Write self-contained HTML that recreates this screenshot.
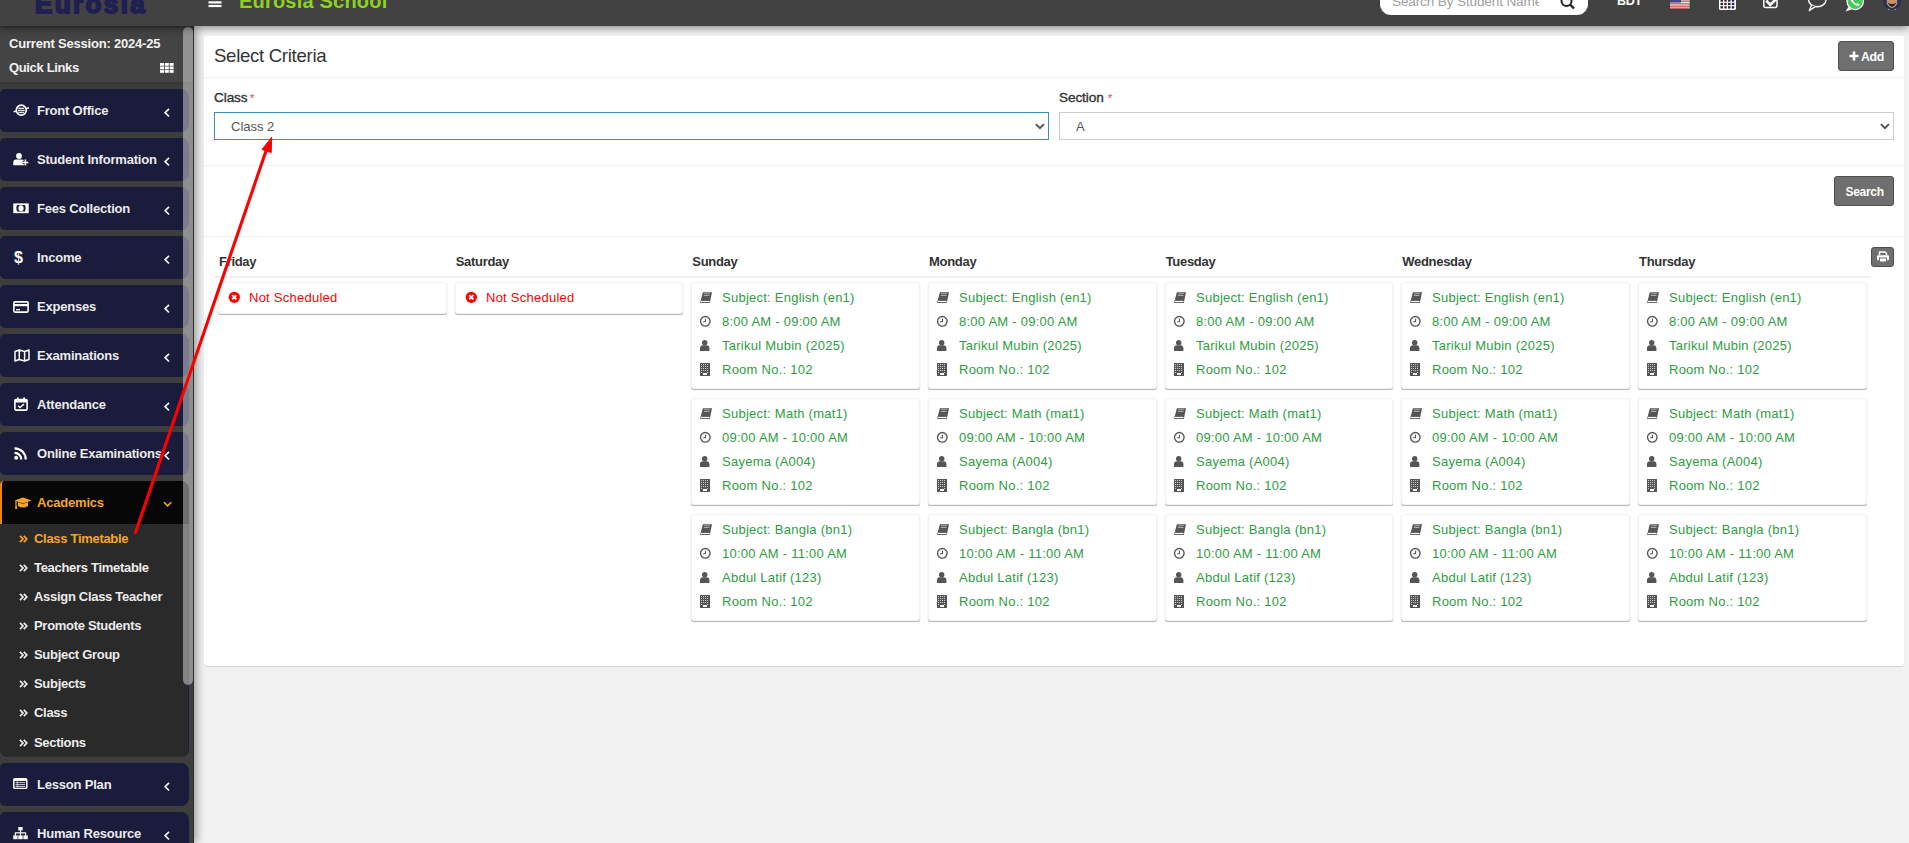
<!DOCTYPE html>
<html><head><meta charset="utf-8"><style>
*{box-sizing:border-box;margin:0;padding:0}
html,body{width:1909px;height:843px;overflow:hidden;background:#f2f2f2;font-family:"Liberation Sans",sans-serif}
.abs{position:absolute;white-space:nowrap}
#header{position:absolute;left:0;top:0;width:1909px;height:26px;background:#424242;z-index:5;box-shadow:0 2px 8px rgba(0,0,0,.45)}
#sidebar{position:absolute;left:0;top:26px;width:194px;height:817px;background:#3d3d3d;z-index:4;box-shadow:3px 0 8px rgba(0,0,0,.35)}
.mi{position:absolute;left:0;width:189px;height:43px;background:#1b1c3b;border-radius:5px 8px 8px 5px;color:#ebebeb;font-weight:700;font-size:13px}
.mi .t{position:absolute;left:37px;top:14px;white-space:nowrap;letter-spacing:-0.2px}
.mi svg{position:absolute}
.sub{position:absolute;left:0;width:189px;background:#2a2a2a;border-radius:0 0 7px 7px;border-right:1px solid #1e1f40}
.si{position:absolute;left:34px;color:#ececec;font-weight:700;font-size:13px;white-space:nowrap;letter-spacing:-0.3px}
.sic{position:absolute;left:19px}.sic svg{display:block}
#content{position:absolute;left:204px;top:36px;width:1700px;height:630px;background:#fff;border-radius:3px;box-shadow:0 1px 1px rgba(0,0,0,.13)}
.hr{position:absolute;left:0;width:1700px;height:1px;background:#f2f2f2}
.btn{position:absolute;background:#6f6f6f;border:1px solid #4f4f4f;border-radius:3px;color:#fff;font-size:12px}
.lbl{position:absolute;font-size:13.6px;font-weight:400;color:#333;white-space:nowrap;letter-spacing:-0.1px;-webkit-text-stroke:0.35px #333}
.lbl i{color:#f33;font-style:normal;font-size:11px;font-weight:400;position:absolute;top:0px;-webkit-text-stroke:0}
.sel{position:absolute;height:28px;border:1px solid #ccc;background:#fff;font-size:13px;color:#555}
.sel span{position:absolute;left:16px;top:6px}
.sel svg{position:absolute;right:3px;top:10px}
.day{position:absolute;font-weight:700;font-size:13px;color:#333;white-space:nowrap;letter-spacing:-0.3px}
.card{position:absolute;width:229px;background:#fff;border:1px solid #f2f2f2;border-radius:2.5px;box-shadow:0 1px 1px rgba(0,0,0,.3)}
.r{position:absolute;font-size:13px;color:#2e9d3f;white-space:nowrap;letter-spacing:0.25px}
.card svg{position:absolute}
</style></head><body>
<div id="header">
<div class="abs" style="left:35px;top:-9px;font-size:26px;font-weight:700;color:#201f52;letter-spacing:2.4px;-webkit-text-stroke:1.8px #201f52;line-height:27px">Eurosia</div>
<svg class="abs" style="left:208px;top:0" width="14" height="8"><rect x="0.5" y="1.3" width="13" height="2.2" fill="#fff"/><rect x="0.5" y="4.9" width="13" height="2.2" fill="#fff"/></svg>
<div class="abs" style="left:239px;top:-10px;font-size:20px;font-weight:700;color:#8ed21f;line-height:22px;letter-spacing:0.2px">Eurosia School</div>
<div class="abs" style="left:1380px;top:-20px;width:208px;height:35px;background:#fff;border-radius:11px"></div>
<div class="abs" style="left:1392px;top:-6px;font-size:13.6px;letter-spacing:-0.15px;color:#a0a0a0;width:147px;overflow:hidden;line-height:16px">Search By Student Name</div>
<svg class="abs" style="left:1560px;top:0" width="16" height="10"><circle cx="6.5" cy="1" r="5" fill="none" stroke="#222" stroke-width="2"/><line x1="10" y1="4.5" x2="14" y2="8.5" stroke="#222" stroke-width="2.4"/></svg>
<div class="abs" style="left:1617px;top:-6px;font-size:12.6px;color:#fff;font-weight:700;line-height:14px;letter-spacing:-0.4px">BDT</div>
<svg class="abs" style="left:1670px;top:0" width="20" height="9"><rect x="0" y="0" width="19.5" height="8.7" fill="#eee"/><rect x="0" y="0.6" width="19.5" height="1.1" fill="#c83a3a"/><rect x="0" y="3.3" width="19.5" height="1.1" fill="#c83a3a"/><rect x="0" y="5.6" width="19.5" height="1.1" fill="#c83a3a"/><rect x="0" y="7.6" width="19.5" height="1.1" fill="#c83a3a"/><rect x="0" y="0" width="11" height="2.6" fill="#3a4b8c"/></svg>
<svg class="abs" style="left:1719px;top:0" width="18" height="11"><rect x="0" y="-4" width="17" height="14" rx="1.6" fill="#fff"/><rect x="1.50" y="-0.60" width="2.5" height="2.3" fill="#2a2a2a"/><rect x="1.50" y="2.80" width="2.5" height="2.3" fill="#2a2a2a"/><rect x="1.50" y="6.20" width="2.5" height="2.3" fill="#2a2a2a"/><rect x="5.25" y="-0.60" width="2.5" height="2.3" fill="#5a2030"/><rect x="5.25" y="2.80" width="2.5" height="2.3" fill="#5a2030"/><rect x="5.25" y="6.20" width="2.5" height="2.3" fill="#5a2030"/><rect x="9.00" y="-0.60" width="2.5" height="2.3" fill="#2a2a2a"/><rect x="9.00" y="2.80" width="2.5" height="2.3" fill="#2a2a2a"/><rect x="9.00" y="6.20" width="2.5" height="2.3" fill="#2a2a2a"/><rect x="12.75" y="-0.60" width="2.5" height="2.3" fill="#202060"/><rect x="12.75" y="2.80" width="2.5" height="2.3" fill="#202060"/><rect x="12.75" y="6.20" width="2.5" height="2.3" fill="#202060"/></svg>
<svg class="abs" style="left:1763px;top:0" width="16" height="10"><path d="M0.8 -4 V6 Q0.8 7.4 2.2 7.4 H12.6 Q14 7.4 14 6 V-4" fill="none" stroke="#fff" stroke-width="1.5"/><path d="M3.3 0.6 L7.2 4.8 L14.8 -2.5" fill="none" stroke="#fff" stroke-width="2.6"/></svg>
<svg class="abs" style="left:1807px;top:0" width="21" height="12"><ellipse cx="10.3" cy="-0.5" rx="8.8" ry="7.2" fill="none" stroke="#fff" stroke-width="1.4"/><path d="M4.5 5.2 L2.3 10.6 L8.6 6.4" fill="#424242" stroke="#fff" stroke-width="1.3" stroke-linejoin="round"/></svg>
<svg class="abs" style="left:1845px;top:0" width="20" height="12"><circle cx="10.2" cy="1.4" r="8.8" fill="#fff"/><path d="M3.3 7 L0.6 11.5 L6.5 9.6 Z" fill="#fff"/><circle cx="10.2" cy="1.4" r="7.6" fill="#4ac959"/><path d="M5.6 -1.5 Q6.5 4.5 13.5 6 L14.8 4.3 L12.4 3.2 L11.2 4 Q8.6 2.6 8 0.2 L8.9 -1 Z" fill="#fff"/></svg>
<svg class="abs" style="left:1883px;top:0" width="19" height="11"><circle cx="9" cy="1" r="9" fill="#243058"/><path d="M3.8 -4 H14.2 V4 Q9 12 3.8 4Z" fill="#c8916c"/><path d="M4.5 2.5 Q9 11 13.5 2.5 Q9 5.5 4.5 2.5Z" fill="#2a2228"/><path d="M5 8.5 Q9 12 13 8.5 L13 10 H5Z" fill="#6fb0b0"/></svg>
</div>
<div id="sidebar">
<div class="abs" style="left:0;top:1px;width:194px;height:55px;background:#444"></div>
<div class="abs" style="left:0;top:0;width:194px;height:3px;background:linear-gradient(#363636,#444)"></div>
<div class="abs" style="left:0;top:56px;width:194px;height:5px;background:linear-gradient(#343434,#3d3d3d)"></div>
<div class="abs" style="left:9px;top:10px;font-size:13px;font-weight:700;color:#f2f2f2;letter-spacing:-0.2px;line-height:15px">Current Session: 2024-25</div>
<div class="abs" style="left:9px;top:34px;font-size:13px;font-weight:700;color:#f2f2f2;letter-spacing:-0.35px;line-height:15px">Quick Links</div>
<svg class="abs" style="left:160px;top:37px" width="14" height="10"><rect x="0.0" y="0.0" width="4" height="2.8" fill="#fff"/><rect x="0.0" y="3.5" width="4" height="2.8" fill="#fff"/><rect x="0.0" y="7.0" width="4" height="2.8" fill="#fff"/><rect x="4.8" y="0.0" width="4" height="2.8" fill="#fff"/><rect x="4.8" y="3.5" width="4" height="2.8" fill="#fff"/><rect x="4.8" y="7.0" width="4" height="2.8" fill="#fff"/><rect x="9.6" y="0.0" width="4" height="2.8" fill="#fff"/><rect x="9.6" y="3.5" width="4" height="2.8" fill="#fff"/><rect x="9.6" y="7.0" width="4" height="2.8" fill="#fff"/></svg>
<div class="mi" style="top:63px"><svg style="left:13px;top:15px" width="17" height="13" viewBox="0 0 17 13"><circle cx="8.3" cy="6.2" r="5" fill="none" stroke="#fff" stroke-width="1.7"/><rect x="5.3" y="3.6" width="6" height="1.5" fill="#ddd"/><rect x="5" y="5.8" width="6.6" height="1.5" fill="#ddd"/><rect x="5.3" y="8" width="6" height="1.2" fill="#ddd"/><path d="M0.6 7.8 L4 7 M12.8 4.6 L16 3.8" stroke="#fff" stroke-width="1.4"/></svg><div class="t">Front Office</div><svg style="left:164px;top:19px" width="7" height="10" viewBox="0 0 7 10"><path d="M5 0.9 L1.1 4.7 L5 8.5" fill="none" stroke="#f4f4f4" stroke-width="1.7"/></svg></div>
<div class="mi" style="top:112px"><svg style="left:13px;top:15px" width="17" height="13" viewBox="0 0 17 13"><circle cx="6" cy="3" r="2.9" fill="#fff"/><path d="M0.3 12.2 V9.5 Q0.3 6.6 3.2 6.6 H8.6 Q10.5 6.6 11 8 V12.2Z" fill="#fff"/><path d="M12.4 6.6 V12.4 M9.6 9.5 H15.4" stroke="#1b1c3b" stroke-width="3.2"/><path d="M12.4 6.6 V12.4 M9.6 9.5 H15.4" stroke="#fff" stroke-width="1.6"/></svg><div class="t">Student Information</div><svg style="left:164px;top:19px" width="7" height="10" viewBox="0 0 7 10"><path d="M5 0.9 L1.1 4.7 L5 8.5" fill="none" stroke="#f4f4f4" stroke-width="1.7"/></svg></div>
<div class="mi" style="top:161px"><svg style="left:13px;top:16px" width="16" height="11" viewBox="0 0 16 11"><rect x="0.3" y="0.4" width="15.4" height="9.8" fill="#fff"/><path d="M4 2 H12 Q13.6 5.3 12 8.6 H4 Q2.4 5.3 4 2Z" fill="#1b1c3b"/><ellipse cx="8" cy="5.3" rx="2.6" ry="3" fill="#fff"/></svg><div class="t">Fees Collection</div><svg style="left:164px;top:19px" width="7" height="10" viewBox="0 0 7 10"><path d="M5 0.9 L1.1 4.7 L5 8.5" fill="none" stroke="#f4f4f4" stroke-width="1.7"/></svg></div>
<div class="mi" style="top:210px"><div style="position:absolute;left:14px;top:13px;font-size:16px;line-height:18px;font-weight:700;color:#fff">$</div><div class="t">Income</div><svg style="left:164px;top:19px" width="7" height="10" viewBox="0 0 7 10"><path d="M5 0.9 L1.1 4.7 L5 8.5" fill="none" stroke="#f4f4f4" stroke-width="1.7"/></svg></div>
<div class="mi" style="top:259px"><svg style="left:13px;top:16px" width="16" height="12" viewBox="0 0 16 12"><rect x="0.9" y="0.9" width="14.2" height="10.2" rx="1" fill="none" stroke="#fff" stroke-width="1.6"/><rect x="1" y="3" width="14" height="2.2" fill="#fff"/><rect x="3" y="8" width="4" height="1.3" fill="#fff"/></svg><div class="t">Expenses</div><svg style="left:164px;top:19px" width="7" height="10" viewBox="0 0 7 10"><path d="M5 0.9 L1.1 4.7 L5 8.5" fill="none" stroke="#f4f4f4" stroke-width="1.7"/></svg></div>
<div class="mi" style="top:308px"><svg style="left:14px;top:15px" width="16" height="13" viewBox="0 0 16 13"><path d="M1 2.5 L5.3 1 L10.6 2.5 L15 1 V10.5 L10.6 12 L5.3 10.5 L1 12Z M5.3 1 V10.5 M10.6 2.5 V12" fill="none" stroke="#fff" stroke-width="1.5" stroke-linejoin="round"/></svg><div class="t">Examinations</div><svg style="left:164px;top:19px" width="7" height="10" viewBox="0 0 7 10"><path d="M5 0.9 L1.1 4.7 L5 8.5" fill="none" stroke="#f4f4f4" stroke-width="1.7"/></svg></div>
<div class="mi" style="top:357px"><svg style="left:14px;top:14px" width="14" height="14" viewBox="0 0 14 14"><rect x="0.9" y="2.5" width="12.2" height="10.6" rx="1" fill="none" stroke="#fff" stroke-width="1.6"/><rect x="1" y="2.5" width="12" height="3" fill="#fff"/><rect x="3" y="0.5" width="1.8" height="3" fill="#fff"/><rect x="9.2" y="0.5" width="1.8" height="3" fill="#fff"/><path d="M4 8.7 L6 10.6 L10 7" fill="none" stroke="#fff" stroke-width="1.5"/></svg><div class="t">Attendance</div><svg style="left:164px;top:19px" width="7" height="10" viewBox="0 0 7 10"><path d="M5 0.9 L1.1 4.7 L5 8.5" fill="none" stroke="#f4f4f4" stroke-width="1.7"/></svg></div>
<div class="mi" style="top:406px"><svg style="left:14px;top:15px" width="13" height="13" viewBox="0 0 13 13"><circle cx="2.2" cy="10.8" r="2" fill="#fff"/><path d="M0.5 5.8 A6.5 6.5 0 0 1 7.2 12.5" fill="none" stroke="#fff" stroke-width="2.2"/><path d="M0.5 1.3 A11 11 0 0 1 11.7 12.5" fill="none" stroke="#fff" stroke-width="2.2"/></svg><div class="t">Online Examinations</div><svg style="left:164px;top:19px" width="7" height="10" viewBox="0 0 7 10"><path d="M5 0.9 L1.1 4.7 L5 8.5" fill="none" stroke="#f4f4f4" stroke-width="1.7"/></svg></div>
<div class="mi" style="top:455px;background:#070707;border-radius:4px 8px 0 0;color:#f5a623;border-left:2px solid #ea8410"><svg style="left:12px;top:16px" width="18" height="12" viewBox="0 0 18 12"><path d="M0.5 3.5 L9 0.5 L17.5 3.5 L9 6.5Z" fill="#f5a623"/><path d="M4 5 V9 Q9 12 14 9 V5 L9 7Z" fill="#f5a623"/><path d="M2 4 V10" stroke="#f5a623" stroke-width="1.2"/><rect x="1.2" y="9.5" width="1.8" height="2.5" fill="#f5a623"/></svg><div class="t" style="left:35px">Academics</div><svg style="left:161px;top:20px" width="10" height="7" viewBox="0 0 10 7"><path d="M1 1.3 L4.6 4.9 L8.2 1.3" fill="none" stroke="#f5a623" stroke-width="1.6"/></svg></div>
<div class="sub" style="top:498px;height:233px"></div>
<div class="sic" style="top:508.5px;height:8px"><svg width="9" height="8" viewBox="0 0 9 8"><path d="M1 0.8 L4 4 L1 7.2 M4.8 0.8 L7.8 4 L4.8 7.2" fill="none" stroke="#f5a623" stroke-width="1.7"/></svg></div>
<div class="si" style="top:504.5px;color:#f5a623;line-height:15px">Class Timetable</div>
<div class="sic" style="top:537.6px;height:8px"><svg width="9" height="8" viewBox="0 0 9 8"><path d="M1 0.8 L4 4 L1 7.2 M4.8 0.8 L7.8 4 L4.8 7.2" fill="none" stroke="#ececec" stroke-width="1.7"/></svg></div>
<div class="si" style="top:533.6px;color:#ececec;line-height:15px">Teachers Timetable</div>
<div class="sic" style="top:566.8px;height:8px"><svg width="9" height="8" viewBox="0 0 9 8"><path d="M1 0.8 L4 4 L1 7.2 M4.8 0.8 L7.8 4 L4.8 7.2" fill="none" stroke="#ececec" stroke-width="1.7"/></svg></div>
<div class="si" style="top:562.8px;color:#ececec;line-height:15px">Assign Class Teacher</div>
<div class="sic" style="top:596.0px;height:8px"><svg width="9" height="8" viewBox="0 0 9 8"><path d="M1 0.8 L4 4 L1 7.2 M4.8 0.8 L7.8 4 L4.8 7.2" fill="none" stroke="#ececec" stroke-width="1.7"/></svg></div>
<div class="si" style="top:592.0px;color:#ececec;line-height:15px">Promote Students</div>
<div class="sic" style="top:625.1px;height:8px"><svg width="9" height="8" viewBox="0 0 9 8"><path d="M1 0.8 L4 4 L1 7.2 M4.8 0.8 L7.8 4 L4.8 7.2" fill="none" stroke="#ececec" stroke-width="1.7"/></svg></div>
<div class="si" style="top:621.1px;color:#ececec;line-height:15px">Subject Group</div>
<div class="sic" style="top:654.2px;height:8px"><svg width="9" height="8" viewBox="0 0 9 8"><path d="M1 0.8 L4 4 L1 7.2 M4.8 0.8 L7.8 4 L4.8 7.2" fill="none" stroke="#ececec" stroke-width="1.7"/></svg></div>
<div class="si" style="top:650.2px;color:#ececec;line-height:15px">Subjects</div>
<div class="sic" style="top:683.4px;height:8px"><svg width="9" height="8" viewBox="0 0 9 8"><path d="M1 0.8 L4 4 L1 7.2 M4.8 0.8 L7.8 4 L4.8 7.2" fill="none" stroke="#ececec" stroke-width="1.7"/></svg></div>
<div class="si" style="top:679.4px;color:#ececec;line-height:15px">Class</div>
<div class="sic" style="top:712.5px;height:8px"><svg width="9" height="8" viewBox="0 0 9 8"><path d="M1 0.8 L4 4 L1 7.2 M4.8 0.8 L7.8 4 L4.8 7.2" fill="none" stroke="#ececec" stroke-width="1.7"/></svg></div>
<div class="si" style="top:708.5px;color:#ececec;line-height:15px">Sections</div>
<div class="mi" style="top:737px"><svg style="left:13px;top:15px" width="15" height="11" viewBox="0 0 15 11"><rect x="0.8" y="0.8" width="13" height="9.6" rx="1.2" fill="none" stroke="#fff" stroke-width="1.5"/><rect x="1" y="1" width="12.6" height="2" fill="#fff"/><path d="M2.5 4.6 H12.2 M2.5 6.6 H12.2 M2.5 8.5 H12.2" stroke="#ddd" stroke-width="0.9"/><path d="M4.2 3 V9.5" stroke="#ddd" stroke-width="0.7"/></svg><div class="t">Lesson Plan</div><svg style="left:164px;top:19px" width="7" height="10" viewBox="0 0 7 10"><path d="M5 0.9 L1.1 4.7 L5 8.5" fill="none" stroke="#f4f4f4" stroke-width="1.7"/></svg></div>
<div class="mi" style="top:786px"><svg style="left:13px;top:15px" width="15" height="13" viewBox="0 0 15 13"><rect x="5.3" y="0" width="4.4" height="3.4" fill="#fff"/><rect x="0.2" y="8.4" width="4.4" height="3.8" fill="#fff"/><rect x="5.3" y="8.4" width="4.4" height="3.8" fill="#fff"/><rect x="10.4" y="8.4" width="4.4" height="3.8" fill="#fff"/><path d="M7.5 3.3 V8.4 M2.4 8.4 V5.8 H12.6 V8.4" fill="none" stroke="#fff" stroke-width="1.2"/></svg><div class="t">Human Resource</div><svg style="left:164px;top:19px" width="7" height="10" viewBox="0 0 7 10"><path d="M5 0.9 L1.1 4.7 L5 8.5" fill="none" stroke="#f4f4f4" stroke-width="1.7"/></svg></div>
<div class="abs" style="left:193px;top:0;width:1px;height:817px;background:#2e2e2e"></div>
<div class="abs" style="left:183px;top:1px;width:10px;height:658px;border-radius:5px;background:rgba(255,255,255,.42)"></div>
</div>
<div id="content">
<div class="abs" style="left:10px;top:9px;font-size:18.6px;letter-spacing:-0.3px;color:#333;line-height:22px">Select Criteria</div>
<div class="btn" style="left:1634px;top:5px;width:56px;height:30px"><svg style="position:absolute;left:10px;top:9px" width="10" height="10"><path d="M5 0.5 V9.5 M0.5 5 H9.5" stroke="#fff" stroke-width="2.6"/></svg><span style="position:absolute;left:22px;top:8px;font-size:12.3px;font-weight:700;letter-spacing:-0.3px">Add</span></div>
<div class="hr" style="top:41px"></div>
<div class="lbl" style="left:10px;top:54px;line-height:16px">Class<i style="left:36px">*</i></div>
<div class="lbl" style="left:855px;top:54px;line-height:16px">Section<i style="left:49px">*</i></div>
<div class="sel" style="left:10px;top:76px;width:835px;border-color:#3c8dbc"><span>Class 2</span><svg width="11" height="7" viewBox="0 0 11 7"><path d="M1.9 1.1 L5.9 5.1 L9.9 1.1" fill="none" stroke="#505050" stroke-width="1.9"/></svg></div>
<div class="sel" style="left:855px;top:76px;width:835px"><span>A</span><svg width="11" height="7" viewBox="0 0 11 7"><path d="M1.9 1.1 L5.9 5.1 L9.9 1.1" fill="none" stroke="#505050" stroke-width="1.9"/></svg></div>
<div class="hr" style="top:129px"></div>
<div class="btn" style="left:1630px;top:140px;width:60px;height:30px"><span style="position:absolute;left:10.5px;top:8px;font-size:12px;font-weight:700;letter-spacing:-0.3px">Search</span></div>
<div class="hr" style="top:200px"></div>
<div class="btn" style="left:1667px;top:211px;width:23px;height:20px;border-radius:3px"><svg style="position:absolute;left:4px;top:3px" width="14" height="12" viewBox="0 0 14 12"><path d="M3.5 4 V1 H9 L10.5 2.5 V4" fill="none" stroke="#fff" stroke-width="1.4"/><rect x="1" y="4.2" width="12" height="5" rx="1" fill="#fff"/><rect x="3.5" y="7" width="7" height="4" fill="#fff" stroke="#6f6f6f" stroke-width="1"/></svg></div>
<div class="abs" style="left:10px;top:240px;width:1657px;height:2px;background:#f0f0f0"></div>
<div class="day" style="left:15.0px;top:218px;line-height:15px">Friday</div>
<div class="day" style="left:251.7px;top:218px;line-height:15px">Saturday</div>
<div class="day" style="left:488.3px;top:218px;line-height:15px">Sunday</div>
<div class="day" style="left:725.0px;top:218px;line-height:15px">Monday</div>
<div class="day" style="left:961.7px;top:218px;line-height:15px">Tuesday</div>
<div class="day" style="left:1198.3px;top:218px;line-height:15px">Wednesday</div>
<div class="day" style="left:1435.0px;top:218px;line-height:15px">Thursday</div>
<div class="card" style="left:14px;top:246px;height:32px;width:229px"><svg style="left:9px;top:8px" width="13" height="13" viewBox="0 0 13 13"><circle cx="6.3" cy="6.3" r="5.6" fill="#f00"/><path d="M4.2 4.2 L8.4 8.4 M8.4 4.2 L4.2 8.4" stroke="#fff" stroke-width="1.9"/></svg><div class="r" style="left:30px;top:7px;color:#f00;line-height:15px;letter-spacing:0.25px">Not Scheduled</div></div>
<div class="card" style="left:251px;top:246px;height:32px;width:228px"><svg style="left:9px;top:8px" width="13" height="13" viewBox="0 0 13 13"><circle cx="6.3" cy="6.3" r="5.6" fill="#f00"/><path d="M4.2 4.2 L8.4 8.4 M8.4 4.2 L4.2 8.4" stroke="#fff" stroke-width="1.9"/></svg><div class="r" style="left:30px;top:7px;color:#f00;line-height:15px;letter-spacing:0.25px">Not Scheduled</div></div>
<div class="card" style="left:487px;top:246px;height:107px;width:229px"><svg style="left:8px;top:9px" width="13" height="12" viewBox="0 0 13 12"><path d="M2.9 0.2 H12 L9.8 11 H0.2 L0.4 9.4 Z" fill="#555"/><rect x="1" y="8.9" width="8.5" height="1.2" fill="#fff"/><path d="M4.2 1.8 H9.8 M3.8 3.5 H9.4" stroke="#a8a8a8" stroke-width="1.1"/></svg><svg style="left:7px;top:32px" width="13" height="13" viewBox="0 0 13 13"><circle cx="6.3" cy="6.3" r="4.8" fill="none" stroke="#555" stroke-width="1.35"/><path d="M6.5 3.7 V6.7 H4.2" fill="none" stroke="#555" stroke-width="1.1"/></svg><svg style="left:8px;top:57px" width="10" height="12" viewBox="0 0 10 12"><circle cx="4.7" cy="2.7" r="2.7" fill="#555"/><path d="M0 11 V8.2 Q0 5.3 2.9 5.3 H6.5 Q9.4 5.3 9.4 8.2 V11Z" fill="#555"/></svg><svg style="left:8px;top:80px" width="10" height="13" viewBox="0 0 10 13"><rect x="0" y="0" width="10" height="13" fill="#555"/><rect x="1" y="1" width="1" height="1" fill="#c8c8c8"/><rect x="1" y="3" width="1" height="1" fill="#c8c8c8"/><rect x="1" y="5" width="1" height="1" fill="#c8c8c8"/><rect x="1" y="7" width="1" height="1" fill="#c8c8c8"/><rect x="3" y="1" width="1" height="1" fill="#c8c8c8"/><rect x="3" y="3" width="1" height="1" fill="#c8c8c8"/><rect x="3" y="5" width="1" height="1" fill="#c8c8c8"/><rect x="3" y="7" width="1" height="1" fill="#c8c8c8"/><rect x="5" y="1" width="1" height="1" fill="#c8c8c8"/><rect x="5" y="3" width="1" height="1" fill="#c8c8c8"/><rect x="5" y="5" width="1" height="1" fill="#c8c8c8"/><rect x="5" y="7" width="1" height="1" fill="#c8c8c8"/><rect x="7" y="1" width="1" height="1" fill="#c8c8c8"/><rect x="7" y="3" width="1" height="1" fill="#c8c8c8"/><rect x="7" y="5" width="1" height="1" fill="#c8c8c8"/><rect x="7" y="7" width="1" height="1" fill="#c8c8c8"/><rect x="1" y="9" width="1" height="1" fill="#c8c8c8"/><rect x="7" y="9" width="1" height="1" fill="#c8c8c8"/><rect x="3" y="10" width="4" height="2" fill="#fff"/></svg><div class="r" style="left:30px;top:7px;line-height:15px">Subject: English (en1)</div><div class="r" style="left:30px;top:31px;line-height:15px">8:00 AM - 09:00 AM</div><div class="r" style="left:30px;top:55px;line-height:15px">Tarikul Mubin (2025)</div><div class="r" style="left:30px;top:79px;line-height:15px">Room No.: 102</div></div>
<div class="card" style="left:487px;top:362px;height:107px;width:229px"><svg style="left:8px;top:9px" width="13" height="12" viewBox="0 0 13 12"><path d="M2.9 0.2 H12 L9.8 11 H0.2 L0.4 9.4 Z" fill="#555"/><rect x="1" y="8.9" width="8.5" height="1.2" fill="#fff"/><path d="M4.2 1.8 H9.8 M3.8 3.5 H9.4" stroke="#a8a8a8" stroke-width="1.1"/></svg><svg style="left:7px;top:32px" width="13" height="13" viewBox="0 0 13 13"><circle cx="6.3" cy="6.3" r="4.8" fill="none" stroke="#555" stroke-width="1.35"/><path d="M6.5 3.7 V6.7 H4.2" fill="none" stroke="#555" stroke-width="1.1"/></svg><svg style="left:8px;top:57px" width="10" height="12" viewBox="0 0 10 12"><circle cx="4.7" cy="2.7" r="2.7" fill="#555"/><path d="M0 11 V8.2 Q0 5.3 2.9 5.3 H6.5 Q9.4 5.3 9.4 8.2 V11Z" fill="#555"/></svg><svg style="left:8px;top:80px" width="10" height="13" viewBox="0 0 10 13"><rect x="0" y="0" width="10" height="13" fill="#555"/><rect x="1" y="1" width="1" height="1" fill="#c8c8c8"/><rect x="1" y="3" width="1" height="1" fill="#c8c8c8"/><rect x="1" y="5" width="1" height="1" fill="#c8c8c8"/><rect x="1" y="7" width="1" height="1" fill="#c8c8c8"/><rect x="3" y="1" width="1" height="1" fill="#c8c8c8"/><rect x="3" y="3" width="1" height="1" fill="#c8c8c8"/><rect x="3" y="5" width="1" height="1" fill="#c8c8c8"/><rect x="3" y="7" width="1" height="1" fill="#c8c8c8"/><rect x="5" y="1" width="1" height="1" fill="#c8c8c8"/><rect x="5" y="3" width="1" height="1" fill="#c8c8c8"/><rect x="5" y="5" width="1" height="1" fill="#c8c8c8"/><rect x="5" y="7" width="1" height="1" fill="#c8c8c8"/><rect x="7" y="1" width="1" height="1" fill="#c8c8c8"/><rect x="7" y="3" width="1" height="1" fill="#c8c8c8"/><rect x="7" y="5" width="1" height="1" fill="#c8c8c8"/><rect x="7" y="7" width="1" height="1" fill="#c8c8c8"/><rect x="1" y="9" width="1" height="1" fill="#c8c8c8"/><rect x="7" y="9" width="1" height="1" fill="#c8c8c8"/><rect x="3" y="10" width="4" height="2" fill="#fff"/></svg><div class="r" style="left:30px;top:7px;line-height:15px">Subject: Math (mat1)</div><div class="r" style="left:30px;top:31px;line-height:15px">09:00 AM - 10:00 AM</div><div class="r" style="left:30px;top:55px;line-height:15px">Sayema (A004)</div><div class="r" style="left:30px;top:79px;line-height:15px">Room No.: 102</div></div>
<div class="card" style="left:487px;top:478px;height:107px;width:229px"><svg style="left:8px;top:9px" width="13" height="12" viewBox="0 0 13 12"><path d="M2.9 0.2 H12 L9.8 11 H0.2 L0.4 9.4 Z" fill="#555"/><rect x="1" y="8.9" width="8.5" height="1.2" fill="#fff"/><path d="M4.2 1.8 H9.8 M3.8 3.5 H9.4" stroke="#a8a8a8" stroke-width="1.1"/></svg><svg style="left:7px;top:32px" width="13" height="13" viewBox="0 0 13 13"><circle cx="6.3" cy="6.3" r="4.8" fill="none" stroke="#555" stroke-width="1.35"/><path d="M6.5 3.7 V6.7 H4.2" fill="none" stroke="#555" stroke-width="1.1"/></svg><svg style="left:8px;top:57px" width="10" height="12" viewBox="0 0 10 12"><circle cx="4.7" cy="2.7" r="2.7" fill="#555"/><path d="M0 11 V8.2 Q0 5.3 2.9 5.3 H6.5 Q9.4 5.3 9.4 8.2 V11Z" fill="#555"/></svg><svg style="left:8px;top:80px" width="10" height="13" viewBox="0 0 10 13"><rect x="0" y="0" width="10" height="13" fill="#555"/><rect x="1" y="1" width="1" height="1" fill="#c8c8c8"/><rect x="1" y="3" width="1" height="1" fill="#c8c8c8"/><rect x="1" y="5" width="1" height="1" fill="#c8c8c8"/><rect x="1" y="7" width="1" height="1" fill="#c8c8c8"/><rect x="3" y="1" width="1" height="1" fill="#c8c8c8"/><rect x="3" y="3" width="1" height="1" fill="#c8c8c8"/><rect x="3" y="5" width="1" height="1" fill="#c8c8c8"/><rect x="3" y="7" width="1" height="1" fill="#c8c8c8"/><rect x="5" y="1" width="1" height="1" fill="#c8c8c8"/><rect x="5" y="3" width="1" height="1" fill="#c8c8c8"/><rect x="5" y="5" width="1" height="1" fill="#c8c8c8"/><rect x="5" y="7" width="1" height="1" fill="#c8c8c8"/><rect x="7" y="1" width="1" height="1" fill="#c8c8c8"/><rect x="7" y="3" width="1" height="1" fill="#c8c8c8"/><rect x="7" y="5" width="1" height="1" fill="#c8c8c8"/><rect x="7" y="7" width="1" height="1" fill="#c8c8c8"/><rect x="1" y="9" width="1" height="1" fill="#c8c8c8"/><rect x="7" y="9" width="1" height="1" fill="#c8c8c8"/><rect x="3" y="10" width="4" height="2" fill="#fff"/></svg><div class="r" style="left:30px;top:7px;line-height:15px">Subject: Bangla (bn1)</div><div class="r" style="left:30px;top:31px;line-height:15px">10:00 AM - 11:00 AM</div><div class="r" style="left:30px;top:55px;line-height:15px">Abdul Latif (123)</div><div class="r" style="left:30px;top:79px;line-height:15px">Room No.: 102</div></div>
<div class="card" style="left:724px;top:246px;height:107px;width:229px"><svg style="left:8px;top:9px" width="13" height="12" viewBox="0 0 13 12"><path d="M2.9 0.2 H12 L9.8 11 H0.2 L0.4 9.4 Z" fill="#555"/><rect x="1" y="8.9" width="8.5" height="1.2" fill="#fff"/><path d="M4.2 1.8 H9.8 M3.8 3.5 H9.4" stroke="#a8a8a8" stroke-width="1.1"/></svg><svg style="left:7px;top:32px" width="13" height="13" viewBox="0 0 13 13"><circle cx="6.3" cy="6.3" r="4.8" fill="none" stroke="#555" stroke-width="1.35"/><path d="M6.5 3.7 V6.7 H4.2" fill="none" stroke="#555" stroke-width="1.1"/></svg><svg style="left:8px;top:57px" width="10" height="12" viewBox="0 0 10 12"><circle cx="4.7" cy="2.7" r="2.7" fill="#555"/><path d="M0 11 V8.2 Q0 5.3 2.9 5.3 H6.5 Q9.4 5.3 9.4 8.2 V11Z" fill="#555"/></svg><svg style="left:8px;top:80px" width="10" height="13" viewBox="0 0 10 13"><rect x="0" y="0" width="10" height="13" fill="#555"/><rect x="1" y="1" width="1" height="1" fill="#c8c8c8"/><rect x="1" y="3" width="1" height="1" fill="#c8c8c8"/><rect x="1" y="5" width="1" height="1" fill="#c8c8c8"/><rect x="1" y="7" width="1" height="1" fill="#c8c8c8"/><rect x="3" y="1" width="1" height="1" fill="#c8c8c8"/><rect x="3" y="3" width="1" height="1" fill="#c8c8c8"/><rect x="3" y="5" width="1" height="1" fill="#c8c8c8"/><rect x="3" y="7" width="1" height="1" fill="#c8c8c8"/><rect x="5" y="1" width="1" height="1" fill="#c8c8c8"/><rect x="5" y="3" width="1" height="1" fill="#c8c8c8"/><rect x="5" y="5" width="1" height="1" fill="#c8c8c8"/><rect x="5" y="7" width="1" height="1" fill="#c8c8c8"/><rect x="7" y="1" width="1" height="1" fill="#c8c8c8"/><rect x="7" y="3" width="1" height="1" fill="#c8c8c8"/><rect x="7" y="5" width="1" height="1" fill="#c8c8c8"/><rect x="7" y="7" width="1" height="1" fill="#c8c8c8"/><rect x="1" y="9" width="1" height="1" fill="#c8c8c8"/><rect x="7" y="9" width="1" height="1" fill="#c8c8c8"/><rect x="3" y="10" width="4" height="2" fill="#fff"/></svg><div class="r" style="left:30px;top:7px;line-height:15px">Subject: English (en1)</div><div class="r" style="left:30px;top:31px;line-height:15px">8:00 AM - 09:00 AM</div><div class="r" style="left:30px;top:55px;line-height:15px">Tarikul Mubin (2025)</div><div class="r" style="left:30px;top:79px;line-height:15px">Room No.: 102</div></div>
<div class="card" style="left:724px;top:362px;height:107px;width:229px"><svg style="left:8px;top:9px" width="13" height="12" viewBox="0 0 13 12"><path d="M2.9 0.2 H12 L9.8 11 H0.2 L0.4 9.4 Z" fill="#555"/><rect x="1" y="8.9" width="8.5" height="1.2" fill="#fff"/><path d="M4.2 1.8 H9.8 M3.8 3.5 H9.4" stroke="#a8a8a8" stroke-width="1.1"/></svg><svg style="left:7px;top:32px" width="13" height="13" viewBox="0 0 13 13"><circle cx="6.3" cy="6.3" r="4.8" fill="none" stroke="#555" stroke-width="1.35"/><path d="M6.5 3.7 V6.7 H4.2" fill="none" stroke="#555" stroke-width="1.1"/></svg><svg style="left:8px;top:57px" width="10" height="12" viewBox="0 0 10 12"><circle cx="4.7" cy="2.7" r="2.7" fill="#555"/><path d="M0 11 V8.2 Q0 5.3 2.9 5.3 H6.5 Q9.4 5.3 9.4 8.2 V11Z" fill="#555"/></svg><svg style="left:8px;top:80px" width="10" height="13" viewBox="0 0 10 13"><rect x="0" y="0" width="10" height="13" fill="#555"/><rect x="1" y="1" width="1" height="1" fill="#c8c8c8"/><rect x="1" y="3" width="1" height="1" fill="#c8c8c8"/><rect x="1" y="5" width="1" height="1" fill="#c8c8c8"/><rect x="1" y="7" width="1" height="1" fill="#c8c8c8"/><rect x="3" y="1" width="1" height="1" fill="#c8c8c8"/><rect x="3" y="3" width="1" height="1" fill="#c8c8c8"/><rect x="3" y="5" width="1" height="1" fill="#c8c8c8"/><rect x="3" y="7" width="1" height="1" fill="#c8c8c8"/><rect x="5" y="1" width="1" height="1" fill="#c8c8c8"/><rect x="5" y="3" width="1" height="1" fill="#c8c8c8"/><rect x="5" y="5" width="1" height="1" fill="#c8c8c8"/><rect x="5" y="7" width="1" height="1" fill="#c8c8c8"/><rect x="7" y="1" width="1" height="1" fill="#c8c8c8"/><rect x="7" y="3" width="1" height="1" fill="#c8c8c8"/><rect x="7" y="5" width="1" height="1" fill="#c8c8c8"/><rect x="7" y="7" width="1" height="1" fill="#c8c8c8"/><rect x="1" y="9" width="1" height="1" fill="#c8c8c8"/><rect x="7" y="9" width="1" height="1" fill="#c8c8c8"/><rect x="3" y="10" width="4" height="2" fill="#fff"/></svg><div class="r" style="left:30px;top:7px;line-height:15px">Subject: Math (mat1)</div><div class="r" style="left:30px;top:31px;line-height:15px">09:00 AM - 10:00 AM</div><div class="r" style="left:30px;top:55px;line-height:15px">Sayema (A004)</div><div class="r" style="left:30px;top:79px;line-height:15px">Room No.: 102</div></div>
<div class="card" style="left:724px;top:478px;height:107px;width:229px"><svg style="left:8px;top:9px" width="13" height="12" viewBox="0 0 13 12"><path d="M2.9 0.2 H12 L9.8 11 H0.2 L0.4 9.4 Z" fill="#555"/><rect x="1" y="8.9" width="8.5" height="1.2" fill="#fff"/><path d="M4.2 1.8 H9.8 M3.8 3.5 H9.4" stroke="#a8a8a8" stroke-width="1.1"/></svg><svg style="left:7px;top:32px" width="13" height="13" viewBox="0 0 13 13"><circle cx="6.3" cy="6.3" r="4.8" fill="none" stroke="#555" stroke-width="1.35"/><path d="M6.5 3.7 V6.7 H4.2" fill="none" stroke="#555" stroke-width="1.1"/></svg><svg style="left:8px;top:57px" width="10" height="12" viewBox="0 0 10 12"><circle cx="4.7" cy="2.7" r="2.7" fill="#555"/><path d="M0 11 V8.2 Q0 5.3 2.9 5.3 H6.5 Q9.4 5.3 9.4 8.2 V11Z" fill="#555"/></svg><svg style="left:8px;top:80px" width="10" height="13" viewBox="0 0 10 13"><rect x="0" y="0" width="10" height="13" fill="#555"/><rect x="1" y="1" width="1" height="1" fill="#c8c8c8"/><rect x="1" y="3" width="1" height="1" fill="#c8c8c8"/><rect x="1" y="5" width="1" height="1" fill="#c8c8c8"/><rect x="1" y="7" width="1" height="1" fill="#c8c8c8"/><rect x="3" y="1" width="1" height="1" fill="#c8c8c8"/><rect x="3" y="3" width="1" height="1" fill="#c8c8c8"/><rect x="3" y="5" width="1" height="1" fill="#c8c8c8"/><rect x="3" y="7" width="1" height="1" fill="#c8c8c8"/><rect x="5" y="1" width="1" height="1" fill="#c8c8c8"/><rect x="5" y="3" width="1" height="1" fill="#c8c8c8"/><rect x="5" y="5" width="1" height="1" fill="#c8c8c8"/><rect x="5" y="7" width="1" height="1" fill="#c8c8c8"/><rect x="7" y="1" width="1" height="1" fill="#c8c8c8"/><rect x="7" y="3" width="1" height="1" fill="#c8c8c8"/><rect x="7" y="5" width="1" height="1" fill="#c8c8c8"/><rect x="7" y="7" width="1" height="1" fill="#c8c8c8"/><rect x="1" y="9" width="1" height="1" fill="#c8c8c8"/><rect x="7" y="9" width="1" height="1" fill="#c8c8c8"/><rect x="3" y="10" width="4" height="2" fill="#fff"/></svg><div class="r" style="left:30px;top:7px;line-height:15px">Subject: Bangla (bn1)</div><div class="r" style="left:30px;top:31px;line-height:15px">10:00 AM - 11:00 AM</div><div class="r" style="left:30px;top:55px;line-height:15px">Abdul Latif (123)</div><div class="r" style="left:30px;top:79px;line-height:15px">Room No.: 102</div></div>
<div class="card" style="left:961px;top:246px;height:107px;width:228px"><svg style="left:8px;top:9px" width="13" height="12" viewBox="0 0 13 12"><path d="M2.9 0.2 H12 L9.8 11 H0.2 L0.4 9.4 Z" fill="#555"/><rect x="1" y="8.9" width="8.5" height="1.2" fill="#fff"/><path d="M4.2 1.8 H9.8 M3.8 3.5 H9.4" stroke="#a8a8a8" stroke-width="1.1"/></svg><svg style="left:7px;top:32px" width="13" height="13" viewBox="0 0 13 13"><circle cx="6.3" cy="6.3" r="4.8" fill="none" stroke="#555" stroke-width="1.35"/><path d="M6.5 3.7 V6.7 H4.2" fill="none" stroke="#555" stroke-width="1.1"/></svg><svg style="left:8px;top:57px" width="10" height="12" viewBox="0 0 10 12"><circle cx="4.7" cy="2.7" r="2.7" fill="#555"/><path d="M0 11 V8.2 Q0 5.3 2.9 5.3 H6.5 Q9.4 5.3 9.4 8.2 V11Z" fill="#555"/></svg><svg style="left:8px;top:80px" width="10" height="13" viewBox="0 0 10 13"><rect x="0" y="0" width="10" height="13" fill="#555"/><rect x="1" y="1" width="1" height="1" fill="#c8c8c8"/><rect x="1" y="3" width="1" height="1" fill="#c8c8c8"/><rect x="1" y="5" width="1" height="1" fill="#c8c8c8"/><rect x="1" y="7" width="1" height="1" fill="#c8c8c8"/><rect x="3" y="1" width="1" height="1" fill="#c8c8c8"/><rect x="3" y="3" width="1" height="1" fill="#c8c8c8"/><rect x="3" y="5" width="1" height="1" fill="#c8c8c8"/><rect x="3" y="7" width="1" height="1" fill="#c8c8c8"/><rect x="5" y="1" width="1" height="1" fill="#c8c8c8"/><rect x="5" y="3" width="1" height="1" fill="#c8c8c8"/><rect x="5" y="5" width="1" height="1" fill="#c8c8c8"/><rect x="5" y="7" width="1" height="1" fill="#c8c8c8"/><rect x="7" y="1" width="1" height="1" fill="#c8c8c8"/><rect x="7" y="3" width="1" height="1" fill="#c8c8c8"/><rect x="7" y="5" width="1" height="1" fill="#c8c8c8"/><rect x="7" y="7" width="1" height="1" fill="#c8c8c8"/><rect x="1" y="9" width="1" height="1" fill="#c8c8c8"/><rect x="7" y="9" width="1" height="1" fill="#c8c8c8"/><rect x="3" y="10" width="4" height="2" fill="#fff"/></svg><div class="r" style="left:30px;top:7px;line-height:15px">Subject: English (en1)</div><div class="r" style="left:30px;top:31px;line-height:15px">8:00 AM - 09:00 AM</div><div class="r" style="left:30px;top:55px;line-height:15px">Tarikul Mubin (2025)</div><div class="r" style="left:30px;top:79px;line-height:15px">Room No.: 102</div></div>
<div class="card" style="left:961px;top:362px;height:107px;width:228px"><svg style="left:8px;top:9px" width="13" height="12" viewBox="0 0 13 12"><path d="M2.9 0.2 H12 L9.8 11 H0.2 L0.4 9.4 Z" fill="#555"/><rect x="1" y="8.9" width="8.5" height="1.2" fill="#fff"/><path d="M4.2 1.8 H9.8 M3.8 3.5 H9.4" stroke="#a8a8a8" stroke-width="1.1"/></svg><svg style="left:7px;top:32px" width="13" height="13" viewBox="0 0 13 13"><circle cx="6.3" cy="6.3" r="4.8" fill="none" stroke="#555" stroke-width="1.35"/><path d="M6.5 3.7 V6.7 H4.2" fill="none" stroke="#555" stroke-width="1.1"/></svg><svg style="left:8px;top:57px" width="10" height="12" viewBox="0 0 10 12"><circle cx="4.7" cy="2.7" r="2.7" fill="#555"/><path d="M0 11 V8.2 Q0 5.3 2.9 5.3 H6.5 Q9.4 5.3 9.4 8.2 V11Z" fill="#555"/></svg><svg style="left:8px;top:80px" width="10" height="13" viewBox="0 0 10 13"><rect x="0" y="0" width="10" height="13" fill="#555"/><rect x="1" y="1" width="1" height="1" fill="#c8c8c8"/><rect x="1" y="3" width="1" height="1" fill="#c8c8c8"/><rect x="1" y="5" width="1" height="1" fill="#c8c8c8"/><rect x="1" y="7" width="1" height="1" fill="#c8c8c8"/><rect x="3" y="1" width="1" height="1" fill="#c8c8c8"/><rect x="3" y="3" width="1" height="1" fill="#c8c8c8"/><rect x="3" y="5" width="1" height="1" fill="#c8c8c8"/><rect x="3" y="7" width="1" height="1" fill="#c8c8c8"/><rect x="5" y="1" width="1" height="1" fill="#c8c8c8"/><rect x="5" y="3" width="1" height="1" fill="#c8c8c8"/><rect x="5" y="5" width="1" height="1" fill="#c8c8c8"/><rect x="5" y="7" width="1" height="1" fill="#c8c8c8"/><rect x="7" y="1" width="1" height="1" fill="#c8c8c8"/><rect x="7" y="3" width="1" height="1" fill="#c8c8c8"/><rect x="7" y="5" width="1" height="1" fill="#c8c8c8"/><rect x="7" y="7" width="1" height="1" fill="#c8c8c8"/><rect x="1" y="9" width="1" height="1" fill="#c8c8c8"/><rect x="7" y="9" width="1" height="1" fill="#c8c8c8"/><rect x="3" y="10" width="4" height="2" fill="#fff"/></svg><div class="r" style="left:30px;top:7px;line-height:15px">Subject: Math (mat1)</div><div class="r" style="left:30px;top:31px;line-height:15px">09:00 AM - 10:00 AM</div><div class="r" style="left:30px;top:55px;line-height:15px">Sayema (A004)</div><div class="r" style="left:30px;top:79px;line-height:15px">Room No.: 102</div></div>
<div class="card" style="left:961px;top:478px;height:107px;width:228px"><svg style="left:8px;top:9px" width="13" height="12" viewBox="0 0 13 12"><path d="M2.9 0.2 H12 L9.8 11 H0.2 L0.4 9.4 Z" fill="#555"/><rect x="1" y="8.9" width="8.5" height="1.2" fill="#fff"/><path d="M4.2 1.8 H9.8 M3.8 3.5 H9.4" stroke="#a8a8a8" stroke-width="1.1"/></svg><svg style="left:7px;top:32px" width="13" height="13" viewBox="0 0 13 13"><circle cx="6.3" cy="6.3" r="4.8" fill="none" stroke="#555" stroke-width="1.35"/><path d="M6.5 3.7 V6.7 H4.2" fill="none" stroke="#555" stroke-width="1.1"/></svg><svg style="left:8px;top:57px" width="10" height="12" viewBox="0 0 10 12"><circle cx="4.7" cy="2.7" r="2.7" fill="#555"/><path d="M0 11 V8.2 Q0 5.3 2.9 5.3 H6.5 Q9.4 5.3 9.4 8.2 V11Z" fill="#555"/></svg><svg style="left:8px;top:80px" width="10" height="13" viewBox="0 0 10 13"><rect x="0" y="0" width="10" height="13" fill="#555"/><rect x="1" y="1" width="1" height="1" fill="#c8c8c8"/><rect x="1" y="3" width="1" height="1" fill="#c8c8c8"/><rect x="1" y="5" width="1" height="1" fill="#c8c8c8"/><rect x="1" y="7" width="1" height="1" fill="#c8c8c8"/><rect x="3" y="1" width="1" height="1" fill="#c8c8c8"/><rect x="3" y="3" width="1" height="1" fill="#c8c8c8"/><rect x="3" y="5" width="1" height="1" fill="#c8c8c8"/><rect x="3" y="7" width="1" height="1" fill="#c8c8c8"/><rect x="5" y="1" width="1" height="1" fill="#c8c8c8"/><rect x="5" y="3" width="1" height="1" fill="#c8c8c8"/><rect x="5" y="5" width="1" height="1" fill="#c8c8c8"/><rect x="5" y="7" width="1" height="1" fill="#c8c8c8"/><rect x="7" y="1" width="1" height="1" fill="#c8c8c8"/><rect x="7" y="3" width="1" height="1" fill="#c8c8c8"/><rect x="7" y="5" width="1" height="1" fill="#c8c8c8"/><rect x="7" y="7" width="1" height="1" fill="#c8c8c8"/><rect x="1" y="9" width="1" height="1" fill="#c8c8c8"/><rect x="7" y="9" width="1" height="1" fill="#c8c8c8"/><rect x="3" y="10" width="4" height="2" fill="#fff"/></svg><div class="r" style="left:30px;top:7px;line-height:15px">Subject: Bangla (bn1)</div><div class="r" style="left:30px;top:31px;line-height:15px">10:00 AM - 11:00 AM</div><div class="r" style="left:30px;top:55px;line-height:15px">Abdul Latif (123)</div><div class="r" style="left:30px;top:79px;line-height:15px">Room No.: 102</div></div>
<div class="card" style="left:1197px;top:246px;height:107px;width:229px"><svg style="left:8px;top:9px" width="13" height="12" viewBox="0 0 13 12"><path d="M2.9 0.2 H12 L9.8 11 H0.2 L0.4 9.4 Z" fill="#555"/><rect x="1" y="8.9" width="8.5" height="1.2" fill="#fff"/><path d="M4.2 1.8 H9.8 M3.8 3.5 H9.4" stroke="#a8a8a8" stroke-width="1.1"/></svg><svg style="left:7px;top:32px" width="13" height="13" viewBox="0 0 13 13"><circle cx="6.3" cy="6.3" r="4.8" fill="none" stroke="#555" stroke-width="1.35"/><path d="M6.5 3.7 V6.7 H4.2" fill="none" stroke="#555" stroke-width="1.1"/></svg><svg style="left:8px;top:57px" width="10" height="12" viewBox="0 0 10 12"><circle cx="4.7" cy="2.7" r="2.7" fill="#555"/><path d="M0 11 V8.2 Q0 5.3 2.9 5.3 H6.5 Q9.4 5.3 9.4 8.2 V11Z" fill="#555"/></svg><svg style="left:8px;top:80px" width="10" height="13" viewBox="0 0 10 13"><rect x="0" y="0" width="10" height="13" fill="#555"/><rect x="1" y="1" width="1" height="1" fill="#c8c8c8"/><rect x="1" y="3" width="1" height="1" fill="#c8c8c8"/><rect x="1" y="5" width="1" height="1" fill="#c8c8c8"/><rect x="1" y="7" width="1" height="1" fill="#c8c8c8"/><rect x="3" y="1" width="1" height="1" fill="#c8c8c8"/><rect x="3" y="3" width="1" height="1" fill="#c8c8c8"/><rect x="3" y="5" width="1" height="1" fill="#c8c8c8"/><rect x="3" y="7" width="1" height="1" fill="#c8c8c8"/><rect x="5" y="1" width="1" height="1" fill="#c8c8c8"/><rect x="5" y="3" width="1" height="1" fill="#c8c8c8"/><rect x="5" y="5" width="1" height="1" fill="#c8c8c8"/><rect x="5" y="7" width="1" height="1" fill="#c8c8c8"/><rect x="7" y="1" width="1" height="1" fill="#c8c8c8"/><rect x="7" y="3" width="1" height="1" fill="#c8c8c8"/><rect x="7" y="5" width="1" height="1" fill="#c8c8c8"/><rect x="7" y="7" width="1" height="1" fill="#c8c8c8"/><rect x="1" y="9" width="1" height="1" fill="#c8c8c8"/><rect x="7" y="9" width="1" height="1" fill="#c8c8c8"/><rect x="3" y="10" width="4" height="2" fill="#fff"/></svg><div class="r" style="left:30px;top:7px;line-height:15px">Subject: English (en1)</div><div class="r" style="left:30px;top:31px;line-height:15px">8:00 AM - 09:00 AM</div><div class="r" style="left:30px;top:55px;line-height:15px">Tarikul Mubin (2025)</div><div class="r" style="left:30px;top:79px;line-height:15px">Room No.: 102</div></div>
<div class="card" style="left:1197px;top:362px;height:107px;width:229px"><svg style="left:8px;top:9px" width="13" height="12" viewBox="0 0 13 12"><path d="M2.9 0.2 H12 L9.8 11 H0.2 L0.4 9.4 Z" fill="#555"/><rect x="1" y="8.9" width="8.5" height="1.2" fill="#fff"/><path d="M4.2 1.8 H9.8 M3.8 3.5 H9.4" stroke="#a8a8a8" stroke-width="1.1"/></svg><svg style="left:7px;top:32px" width="13" height="13" viewBox="0 0 13 13"><circle cx="6.3" cy="6.3" r="4.8" fill="none" stroke="#555" stroke-width="1.35"/><path d="M6.5 3.7 V6.7 H4.2" fill="none" stroke="#555" stroke-width="1.1"/></svg><svg style="left:8px;top:57px" width="10" height="12" viewBox="0 0 10 12"><circle cx="4.7" cy="2.7" r="2.7" fill="#555"/><path d="M0 11 V8.2 Q0 5.3 2.9 5.3 H6.5 Q9.4 5.3 9.4 8.2 V11Z" fill="#555"/></svg><svg style="left:8px;top:80px" width="10" height="13" viewBox="0 0 10 13"><rect x="0" y="0" width="10" height="13" fill="#555"/><rect x="1" y="1" width="1" height="1" fill="#c8c8c8"/><rect x="1" y="3" width="1" height="1" fill="#c8c8c8"/><rect x="1" y="5" width="1" height="1" fill="#c8c8c8"/><rect x="1" y="7" width="1" height="1" fill="#c8c8c8"/><rect x="3" y="1" width="1" height="1" fill="#c8c8c8"/><rect x="3" y="3" width="1" height="1" fill="#c8c8c8"/><rect x="3" y="5" width="1" height="1" fill="#c8c8c8"/><rect x="3" y="7" width="1" height="1" fill="#c8c8c8"/><rect x="5" y="1" width="1" height="1" fill="#c8c8c8"/><rect x="5" y="3" width="1" height="1" fill="#c8c8c8"/><rect x="5" y="5" width="1" height="1" fill="#c8c8c8"/><rect x="5" y="7" width="1" height="1" fill="#c8c8c8"/><rect x="7" y="1" width="1" height="1" fill="#c8c8c8"/><rect x="7" y="3" width="1" height="1" fill="#c8c8c8"/><rect x="7" y="5" width="1" height="1" fill="#c8c8c8"/><rect x="7" y="7" width="1" height="1" fill="#c8c8c8"/><rect x="1" y="9" width="1" height="1" fill="#c8c8c8"/><rect x="7" y="9" width="1" height="1" fill="#c8c8c8"/><rect x="3" y="10" width="4" height="2" fill="#fff"/></svg><div class="r" style="left:30px;top:7px;line-height:15px">Subject: Math (mat1)</div><div class="r" style="left:30px;top:31px;line-height:15px">09:00 AM - 10:00 AM</div><div class="r" style="left:30px;top:55px;line-height:15px">Sayema (A004)</div><div class="r" style="left:30px;top:79px;line-height:15px">Room No.: 102</div></div>
<div class="card" style="left:1197px;top:478px;height:107px;width:229px"><svg style="left:8px;top:9px" width="13" height="12" viewBox="0 0 13 12"><path d="M2.9 0.2 H12 L9.8 11 H0.2 L0.4 9.4 Z" fill="#555"/><rect x="1" y="8.9" width="8.5" height="1.2" fill="#fff"/><path d="M4.2 1.8 H9.8 M3.8 3.5 H9.4" stroke="#a8a8a8" stroke-width="1.1"/></svg><svg style="left:7px;top:32px" width="13" height="13" viewBox="0 0 13 13"><circle cx="6.3" cy="6.3" r="4.8" fill="none" stroke="#555" stroke-width="1.35"/><path d="M6.5 3.7 V6.7 H4.2" fill="none" stroke="#555" stroke-width="1.1"/></svg><svg style="left:8px;top:57px" width="10" height="12" viewBox="0 0 10 12"><circle cx="4.7" cy="2.7" r="2.7" fill="#555"/><path d="M0 11 V8.2 Q0 5.3 2.9 5.3 H6.5 Q9.4 5.3 9.4 8.2 V11Z" fill="#555"/></svg><svg style="left:8px;top:80px" width="10" height="13" viewBox="0 0 10 13"><rect x="0" y="0" width="10" height="13" fill="#555"/><rect x="1" y="1" width="1" height="1" fill="#c8c8c8"/><rect x="1" y="3" width="1" height="1" fill="#c8c8c8"/><rect x="1" y="5" width="1" height="1" fill="#c8c8c8"/><rect x="1" y="7" width="1" height="1" fill="#c8c8c8"/><rect x="3" y="1" width="1" height="1" fill="#c8c8c8"/><rect x="3" y="3" width="1" height="1" fill="#c8c8c8"/><rect x="3" y="5" width="1" height="1" fill="#c8c8c8"/><rect x="3" y="7" width="1" height="1" fill="#c8c8c8"/><rect x="5" y="1" width="1" height="1" fill="#c8c8c8"/><rect x="5" y="3" width="1" height="1" fill="#c8c8c8"/><rect x="5" y="5" width="1" height="1" fill="#c8c8c8"/><rect x="5" y="7" width="1" height="1" fill="#c8c8c8"/><rect x="7" y="1" width="1" height="1" fill="#c8c8c8"/><rect x="7" y="3" width="1" height="1" fill="#c8c8c8"/><rect x="7" y="5" width="1" height="1" fill="#c8c8c8"/><rect x="7" y="7" width="1" height="1" fill="#c8c8c8"/><rect x="1" y="9" width="1" height="1" fill="#c8c8c8"/><rect x="7" y="9" width="1" height="1" fill="#c8c8c8"/><rect x="3" y="10" width="4" height="2" fill="#fff"/></svg><div class="r" style="left:30px;top:7px;line-height:15px">Subject: Bangla (bn1)</div><div class="r" style="left:30px;top:31px;line-height:15px">10:00 AM - 11:00 AM</div><div class="r" style="left:30px;top:55px;line-height:15px">Abdul Latif (123)</div><div class="r" style="left:30px;top:79px;line-height:15px">Room No.: 102</div></div>
<div class="card" style="left:1434px;top:246px;height:107px;width:229px"><svg style="left:8px;top:9px" width="13" height="12" viewBox="0 0 13 12"><path d="M2.9 0.2 H12 L9.8 11 H0.2 L0.4 9.4 Z" fill="#555"/><rect x="1" y="8.9" width="8.5" height="1.2" fill="#fff"/><path d="M4.2 1.8 H9.8 M3.8 3.5 H9.4" stroke="#a8a8a8" stroke-width="1.1"/></svg><svg style="left:7px;top:32px" width="13" height="13" viewBox="0 0 13 13"><circle cx="6.3" cy="6.3" r="4.8" fill="none" stroke="#555" stroke-width="1.35"/><path d="M6.5 3.7 V6.7 H4.2" fill="none" stroke="#555" stroke-width="1.1"/></svg><svg style="left:8px;top:57px" width="10" height="12" viewBox="0 0 10 12"><circle cx="4.7" cy="2.7" r="2.7" fill="#555"/><path d="M0 11 V8.2 Q0 5.3 2.9 5.3 H6.5 Q9.4 5.3 9.4 8.2 V11Z" fill="#555"/></svg><svg style="left:8px;top:80px" width="10" height="13" viewBox="0 0 10 13"><rect x="0" y="0" width="10" height="13" fill="#555"/><rect x="1" y="1" width="1" height="1" fill="#c8c8c8"/><rect x="1" y="3" width="1" height="1" fill="#c8c8c8"/><rect x="1" y="5" width="1" height="1" fill="#c8c8c8"/><rect x="1" y="7" width="1" height="1" fill="#c8c8c8"/><rect x="3" y="1" width="1" height="1" fill="#c8c8c8"/><rect x="3" y="3" width="1" height="1" fill="#c8c8c8"/><rect x="3" y="5" width="1" height="1" fill="#c8c8c8"/><rect x="3" y="7" width="1" height="1" fill="#c8c8c8"/><rect x="5" y="1" width="1" height="1" fill="#c8c8c8"/><rect x="5" y="3" width="1" height="1" fill="#c8c8c8"/><rect x="5" y="5" width="1" height="1" fill="#c8c8c8"/><rect x="5" y="7" width="1" height="1" fill="#c8c8c8"/><rect x="7" y="1" width="1" height="1" fill="#c8c8c8"/><rect x="7" y="3" width="1" height="1" fill="#c8c8c8"/><rect x="7" y="5" width="1" height="1" fill="#c8c8c8"/><rect x="7" y="7" width="1" height="1" fill="#c8c8c8"/><rect x="1" y="9" width="1" height="1" fill="#c8c8c8"/><rect x="7" y="9" width="1" height="1" fill="#c8c8c8"/><rect x="3" y="10" width="4" height="2" fill="#fff"/></svg><div class="r" style="left:30px;top:7px;line-height:15px">Subject: English (en1)</div><div class="r" style="left:30px;top:31px;line-height:15px">8:00 AM - 09:00 AM</div><div class="r" style="left:30px;top:55px;line-height:15px">Tarikul Mubin (2025)</div><div class="r" style="left:30px;top:79px;line-height:15px">Room No.: 102</div></div>
<div class="card" style="left:1434px;top:362px;height:107px;width:229px"><svg style="left:8px;top:9px" width="13" height="12" viewBox="0 0 13 12"><path d="M2.9 0.2 H12 L9.8 11 H0.2 L0.4 9.4 Z" fill="#555"/><rect x="1" y="8.9" width="8.5" height="1.2" fill="#fff"/><path d="M4.2 1.8 H9.8 M3.8 3.5 H9.4" stroke="#a8a8a8" stroke-width="1.1"/></svg><svg style="left:7px;top:32px" width="13" height="13" viewBox="0 0 13 13"><circle cx="6.3" cy="6.3" r="4.8" fill="none" stroke="#555" stroke-width="1.35"/><path d="M6.5 3.7 V6.7 H4.2" fill="none" stroke="#555" stroke-width="1.1"/></svg><svg style="left:8px;top:57px" width="10" height="12" viewBox="0 0 10 12"><circle cx="4.7" cy="2.7" r="2.7" fill="#555"/><path d="M0 11 V8.2 Q0 5.3 2.9 5.3 H6.5 Q9.4 5.3 9.4 8.2 V11Z" fill="#555"/></svg><svg style="left:8px;top:80px" width="10" height="13" viewBox="0 0 10 13"><rect x="0" y="0" width="10" height="13" fill="#555"/><rect x="1" y="1" width="1" height="1" fill="#c8c8c8"/><rect x="1" y="3" width="1" height="1" fill="#c8c8c8"/><rect x="1" y="5" width="1" height="1" fill="#c8c8c8"/><rect x="1" y="7" width="1" height="1" fill="#c8c8c8"/><rect x="3" y="1" width="1" height="1" fill="#c8c8c8"/><rect x="3" y="3" width="1" height="1" fill="#c8c8c8"/><rect x="3" y="5" width="1" height="1" fill="#c8c8c8"/><rect x="3" y="7" width="1" height="1" fill="#c8c8c8"/><rect x="5" y="1" width="1" height="1" fill="#c8c8c8"/><rect x="5" y="3" width="1" height="1" fill="#c8c8c8"/><rect x="5" y="5" width="1" height="1" fill="#c8c8c8"/><rect x="5" y="7" width="1" height="1" fill="#c8c8c8"/><rect x="7" y="1" width="1" height="1" fill="#c8c8c8"/><rect x="7" y="3" width="1" height="1" fill="#c8c8c8"/><rect x="7" y="5" width="1" height="1" fill="#c8c8c8"/><rect x="7" y="7" width="1" height="1" fill="#c8c8c8"/><rect x="1" y="9" width="1" height="1" fill="#c8c8c8"/><rect x="7" y="9" width="1" height="1" fill="#c8c8c8"/><rect x="3" y="10" width="4" height="2" fill="#fff"/></svg><div class="r" style="left:30px;top:7px;line-height:15px">Subject: Math (mat1)</div><div class="r" style="left:30px;top:31px;line-height:15px">09:00 AM - 10:00 AM</div><div class="r" style="left:30px;top:55px;line-height:15px">Sayema (A004)</div><div class="r" style="left:30px;top:79px;line-height:15px">Room No.: 102</div></div>
<div class="card" style="left:1434px;top:478px;height:107px;width:229px"><svg style="left:8px;top:9px" width="13" height="12" viewBox="0 0 13 12"><path d="M2.9 0.2 H12 L9.8 11 H0.2 L0.4 9.4 Z" fill="#555"/><rect x="1" y="8.9" width="8.5" height="1.2" fill="#fff"/><path d="M4.2 1.8 H9.8 M3.8 3.5 H9.4" stroke="#a8a8a8" stroke-width="1.1"/></svg><svg style="left:7px;top:32px" width="13" height="13" viewBox="0 0 13 13"><circle cx="6.3" cy="6.3" r="4.8" fill="none" stroke="#555" stroke-width="1.35"/><path d="M6.5 3.7 V6.7 H4.2" fill="none" stroke="#555" stroke-width="1.1"/></svg><svg style="left:8px;top:57px" width="10" height="12" viewBox="0 0 10 12"><circle cx="4.7" cy="2.7" r="2.7" fill="#555"/><path d="M0 11 V8.2 Q0 5.3 2.9 5.3 H6.5 Q9.4 5.3 9.4 8.2 V11Z" fill="#555"/></svg><svg style="left:8px;top:80px" width="10" height="13" viewBox="0 0 10 13"><rect x="0" y="0" width="10" height="13" fill="#555"/><rect x="1" y="1" width="1" height="1" fill="#c8c8c8"/><rect x="1" y="3" width="1" height="1" fill="#c8c8c8"/><rect x="1" y="5" width="1" height="1" fill="#c8c8c8"/><rect x="1" y="7" width="1" height="1" fill="#c8c8c8"/><rect x="3" y="1" width="1" height="1" fill="#c8c8c8"/><rect x="3" y="3" width="1" height="1" fill="#c8c8c8"/><rect x="3" y="5" width="1" height="1" fill="#c8c8c8"/><rect x="3" y="7" width="1" height="1" fill="#c8c8c8"/><rect x="5" y="1" width="1" height="1" fill="#c8c8c8"/><rect x="5" y="3" width="1" height="1" fill="#c8c8c8"/><rect x="5" y="5" width="1" height="1" fill="#c8c8c8"/><rect x="5" y="7" width="1" height="1" fill="#c8c8c8"/><rect x="7" y="1" width="1" height="1" fill="#c8c8c8"/><rect x="7" y="3" width="1" height="1" fill="#c8c8c8"/><rect x="7" y="5" width="1" height="1" fill="#c8c8c8"/><rect x="7" y="7" width="1" height="1" fill="#c8c8c8"/><rect x="1" y="9" width="1" height="1" fill="#c8c8c8"/><rect x="7" y="9" width="1" height="1" fill="#c8c8c8"/><rect x="3" y="10" width="4" height="2" fill="#fff"/></svg><div class="r" style="left:30px;top:7px;line-height:15px">Subject: Bangla (bn1)</div><div class="r" style="left:30px;top:31px;line-height:15px">10:00 AM - 11:00 AM</div><div class="r" style="left:30px;top:55px;line-height:15px">Abdul Latif (123)</div><div class="r" style="left:30px;top:79px;line-height:15px">Room No.: 102</div></div>
</div>
<svg class="abs" style="left:0;top:0;z-index:10" width="1909" height="843"><line x1="135.5" y1="532.5" x2="266" y2="151" stroke="#f00" stroke-width="3.1" stroke-linecap="round"/><path d="M271.7 137.2 L262 149.5 L271.2 152.5Z" fill="#f00" stroke="#f00" stroke-width="1" stroke-linejoin="round"/></svg>
</body></html>
